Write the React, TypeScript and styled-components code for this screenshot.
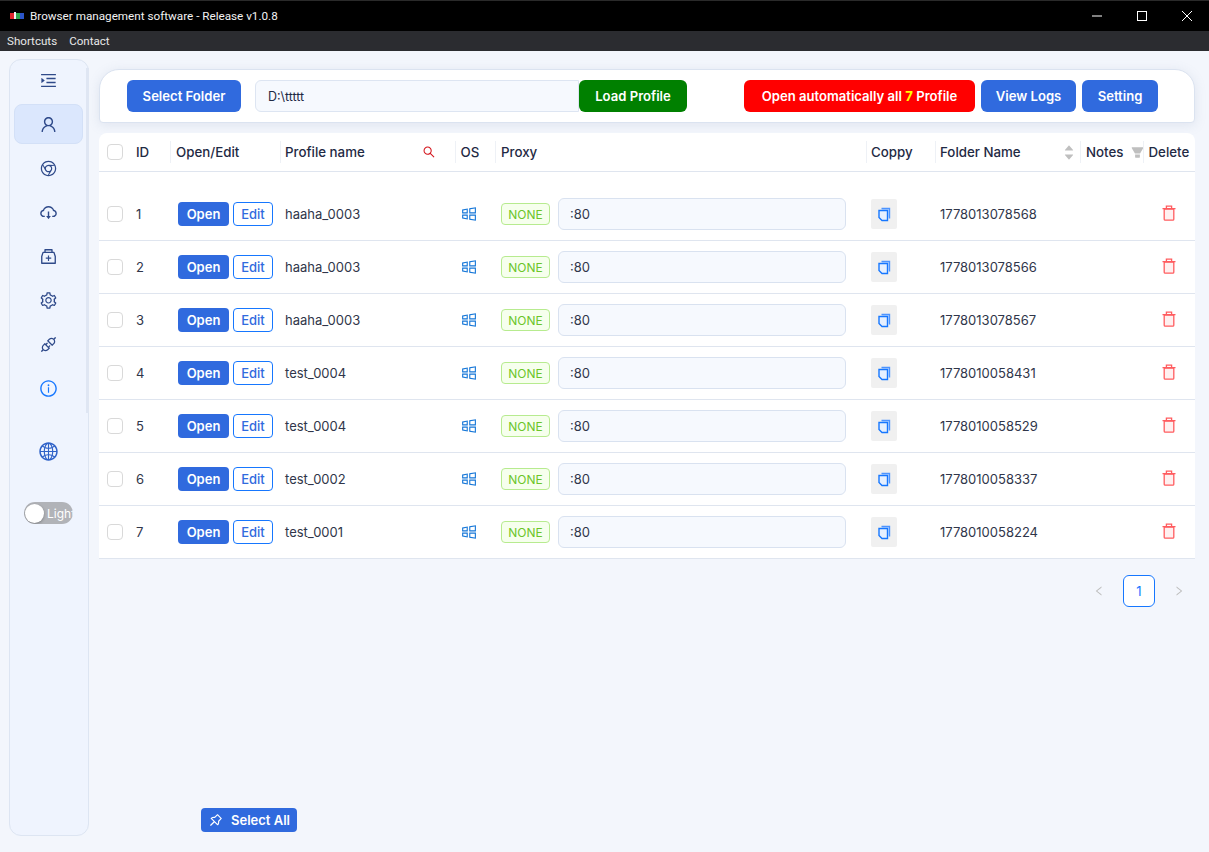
import { FC } from 'react'
import styled, { createGlobalStyle } from 'styled-components'
import {
  AiOutlineApi,
  AiOutlineChrome,
  AiOutlineCloudDownload,
  AiOutlineGlobal,
  AiOutlineInfoCircle,
  AiOutlineMedicineBox,
  AiOutlineMenuUnfold,
  AiOutlinePushpin,
  AiOutlineSearch,
  AiOutlineSetting,
  AiOutlineUser,
  AiOutlineWindows,
  AiFillFilter,
  AiFillCaretUp,
  AiFillCaretDown,
  AiOutlineLeft,
  AiOutlineRight,
} from 'react-icons/ai'

const GlobalStyle = createGlobalStyle`
  html, body {
    margin: 0;
    padding: 0;
    height: 100%;
    background: #f3f6fc;
  }
  * {
    box-sizing: border-box;
  }
  body {
    font-family: Inter, "Liberation Sans", sans-serif;
    font-size: 13px;
    color: #1f2a44;
    overflow: hidden;
  }
`

const Window = styled.div`
  display: flex;
  flex-direction: column;
  width: 1209px;
  height: 852px;
`

const TitleBar = styled.div`
  display: flex;
  align-items: center;
  height: 31px;
  flex: none;
  background: #000;
  border-top: 1px solid #2a2a2a;
  color: #f2f2f2;
  font-family: Roboto, sans-serif;
  font-size: 11.7px;
  padding-left: 10px;
`

const Logo = styled.svg`
  width: 14px;
  height: 8px;
  margin-right: 6px;
`

const TitleText = styled.span`
  flex: 1;
`

const WindowButton = styled.div`
  display: flex;
  align-items: center;
  justify-content: center;
  width: 45px;
  height: 30px;
  svg {
    width: 12px;
    height: 12px;
  }
`

const MenuBar = styled.div`
  display: flex;
  align-items: center;
  gap: 12px;
  height: 20px;
  flex: none;
  background: #2b2c30;
  color: #e8e8e8;
  font-family: Roboto, sans-serif;
  font-size: 11.6px;
  padding-left: 7px;
`

const Body = styled.div`
  display: flex;
  flex: 1;
  min-height: 0;
`

const Sidebar = styled.nav`
  display: flex;
  flex-direction: column;
  align-items: center;
  position: relative;
  width: 80px;
  height: 777px;
  margin: 8px 0 0 9px;
  padding-right: 1px;
  background: #eff4fe;
  border: 1px solid #dde5f2;
  border-radius: 12px;
  flex: none;
  &::after {
    content: '';
    position: absolute;
    right: -1px;
    top: 8px;
    width: 3px;
    height: 345px;
    background: #dfe6f3;
  }
`

const NavItem = styled.div<{ $active?: boolean; $tone?: string }>`
  display: flex;
  align-items: center;
  justify-content: center;
  width: 69px;
  height: 40px;
  margin-bottom: 4px;
  flex: none;
  border-radius: 8px;
  color: ${({ $tone }) => $tone ?? '#2f4a8a'};
  background: ${({ $active }) => ($active ? '#dbe7fd' : 'transparent')};
  border: 1px solid ${({ $active }) => ($active ? '#d3e0f7' : 'transparent')};
  font-size: 19px;
`

const GlobeItem = styled(NavItem)`
  margin-top: 19px;
  font-size: 21px;
`

const Toggle = styled.div`
  display: flex;
  align-items: center;
  width: 49px;
  height: 22px;
  margin-top: 27px;
  border-radius: 11px;
  background: #b1b3b8;
  color: #fff;
  font-size: 12px;
  overflow: hidden;
  flex: none;
`

const ToggleKnob = styled.span`
  width: 19px;
  height: 19px;
  margin: 0 3px 0 1px;
  border-radius: 50%;
  background: #fff;
  box-shadow: 0 1px 3px rgba(0, 0, 0, 0.3);
  flex: none;
`

const Main = styled.main`
  display: flex;
  flex-direction: column;
  flex: 1;
  min-width: 0;
  padding: 18px 14px 20px 10px;
`

const Toolbar = styled.div`
  display: flex;
  align-items: center;
  height: 54px;
  flex: none;
  padding-left: 27px;
  background: #fff;
  border: 1px solid #dbe3f0;
  border-top-left-radius: 20px;
  border-top-right-radius: 20px;
  border-bottom-left-radius: 4px;
  border-bottom-right-radius: 4px;
  box-shadow: 0 2px 12px rgba(120, 135, 170, 0.16);
`

const Button = styled.button<{ $bg?: string; $w: number; $ml?: number }>`
  display: inline-flex;
  align-items: center;
  justify-content: center;
  width: ${({ $w }) => $w}px;
  height: 32px;
  margin-left: ${({ $ml }) => $ml ?? 0}px;
  padding: 0;
  border: none;
  border-radius: 6px;
  background: ${({ $bg }) => $bg ?? '#306ade'};
  color: #fff;
  font-family: inherit;
  font-size: 13.1px;
  font-weight: 600;
  flex: none;
`

const Lucky = styled.b`
  color: #ffff00;
  font-weight: 700;
`

const PathInput = styled.div`
  display: flex;
  align-items: center;
  width: 324px;
  height: 32px;
  margin-left: 14px;
  padding-left: 12px;
  background: #f6f9fe;
  border: 1px solid #dde5f2;
  border-radius: 6px 0 0 6px;
  font-size: 12.5px;
`

const Table = styled.div`
  margin-top: 10px;
  flex: none;
`

const columns = '71px 110px 175px 40px 371px 69px 145px 63px 52px'

const HeaderRow = styled.div`
  display: grid;
  grid-template-columns: ${columns};
  height: 39px;
  background: #fff;
  border-bottom: 1px solid #dfe5ef;
  border-radius: 8px 8px 0 0;
  font-weight: 500;
  font-size: 13.3px;
`

const HeaderCell = styled.div<{ $pl?: number; $pr?: number }>`
  display: flex;
  align-items: center;
  padding-left: ${({ $pl }) => $pl ?? 5}px;
  position: relative;
  justify-content: space-between;
  padding-right: ${({ $pr }) => $pr ?? 8}px;
  &::before {
    content: '';
    position: absolute;
    left: 0;
    top: 8px;
    bottom: 8px;
    width: 1px;
    background: #eef1f6;
  }
`

const IdCell = styled.div`
  display: flex;
  align-items: center;
  gap: 13px;
  padding-left: 8px;
`

const Spacer = styled.div`
  height: 16px;
  background: #fff;
`

const Row = styled.div`
  display: grid;
  grid-template-columns: ${columns};
  align-items: center;
  height: 53px;
  background: #fff;
  border-bottom: 1px solid #dfe5ef;
  font-size: 13px;
  color: #30364a;
`

const Check = styled.span`
  width: 16px;
  height: 16px;
  border: 1px solid #d9d9d9;
  border-radius: 4px;
  background: #fff;
  flex: none;
`

const ActionCell = styled.div`
  display: flex;
  align-items: center;
  gap: 4px;
  padding-left: 8px;
`

const OpenButton = styled.span`
  display: inline-flex;
  align-items: center;
  justify-content: center;
  width: 51px;
  height: 24px;
  background: #306ade;
  color: #fff;
  font-weight: 600;
  border-radius: 4px;
`

const EditButton = styled.span`
  display: inline-flex;
  align-items: center;
  justify-content: center;
  width: 40px;
  height: 24px;
  background: #fff;
  border: 1px solid #1677ff;
  color: #306ade;
  font-weight: 500;
  border-radius: 4px;
`

const NameCell = styled.div`
  padding-left: 5px;
`

const OsCell = styled.div`
  display: flex;
  padding-left: 5px;
  color: #1677d8;
  font-size: 18px;
`

const ProxyCell = styled.div`
  display: flex;
  align-items: center;
  gap: 8px;
  padding-left: 6px;
`

const Tag = styled.span`
  display: inline-flex;
  align-items: center;
  justify-content: center;
  width: 49px;
  height: 22px;
  background: #f6ffed;
  border: 1px solid #b7eb8f;
  border-radius: 4px;
  color: #6cc52a;
  font-size: 12px;
`

const ProxyInput = styled.div`
  display: flex;
  align-items: center;
  width: 288px;
  height: 32px;
  padding-left: 11px;
  background: #f6f9fe;
  border: 1px solid #d9e2f0;
  border-radius: 6px;
`

const CopyCell = styled.div`
  padding-left: 5px;
`

const CopyButton = styled.span`
  display: flex;
  align-items: center;
  justify-content: center;
  width: 26px;
  height: 30px;
  background: #f0f0f0;
  border-radius: 2px;
`

const FolderCell = styled.div`
  padding-left: 5px;
`

const DeleteCell = styled.div`
  display: flex;
  padding-left: 19px;
  margin-top: -2px;
`

const SortIcon = styled.span`
  display: flex;
  flex-direction: column;
  color: #bfbfbf;
  font-size: 12px;
  line-height: 0;
  svg {
    margin: -1.5px 0;
  }
`

const Pagination = styled.div`
  display: flex;
  align-items: center;
  justify-content: flex-end;
  gap: 8px;
  margin-top: 16px;
  color: #bdbdbd;
  font-size: 12px;
`

const PageArrow = styled.span`
  display: flex;
  align-items: center;
  justify-content: center;
  width: 32px;
  height: 32px;
`

const PageNumber = styled.span`
  display: flex;
  align-items: center;
  justify-content: center;
  width: 32px;
  height: 32px;
  background: #fff;
  border: 1px solid #1677ff;
  border-radius: 6px;
  color: #1677ff;
  font-size: 13px;
`

const Footer = styled.div`
  display: flex;
  margin-top: auto;
  padding-left: 102px;
`

const SelectAll = styled.button`
  display: inline-flex;
  align-items: center;
  justify-content: center;
  gap: 7px;
  width: 96px;
  height: 24px;
  padding: 0;
  border: none;
  border-radius: 4px;
  background: #306ade;
  color: #fff;
  font-family: inherit;
  font-size: 13px;
  font-weight: 600;
`

const CopyIcon: FC = () => {
  return <svg width="13" height="15" viewBox="0 0 13 15">
    <path d="M3.5 1.5h8v10" fill="#cfe2ff" stroke="#4d94ff" strokeWidth="1.4" />
    <path d="M1 3.5h8.5v10H4L1 10.5z" fill="#e6f0ff" stroke="#1677ff" strokeWidth="1.4" />
  </svg>
}

const TrashIcon: FC = () => {
  return <svg width="14" height="16" viewBox="0 0 14 16">
    <path d="M2.2 4h9.6v10.2a1 1 0 0 1-1 1H3.2a1 1 0 0 1-1-1z" fill="#fff0f0" stroke="#ff5c5f" strokeWidth="1.3" />
    <path d="M0.5 3.7h13M4.4 3.5V1.1h5.2v2.4" fill="none" stroke="#ff5c5f" strokeWidth="1.3" />
  </svg>
}

const profiles = [
  { id: 1, name: 'haaha_0003', folder: '1778013078568' },
  { id: 2, name: 'haaha_0003', folder: '1778013078566' },
  { id: 3, name: 'haaha_0003', folder: '1778013078567' },
  { id: 4, name: 'test_0004', folder: '1778010058431' },
  { id: 5, name: 'test_0004', folder: '1778010058529' },
  { id: 6, name: 'test_0002', folder: '1778010058337' },
  { id: 7, name: 'test_0001', folder: '1778010058224' },
]

const ProfileRow: FC<{ id: number; name: string; folder: string }> = ({ id, name, folder }) => {
  return <Row>
    <IdCell><Check /><span>{id}</span></IdCell>
    <ActionCell><OpenButton>Open</OpenButton><EditButton>Edit</EditButton></ActionCell>
    <NameCell>{name}</NameCell>
    <OsCell><AiOutlineWindows /></OsCell>
    <ProxyCell><Tag>NONE</Tag><ProxyInput>:80</ProxyInput></ProxyCell>
    <CopyCell><CopyButton><CopyIcon /></CopyButton></CopyCell>
    <FolderCell>{folder}</FolderCell>
    <div />
    <DeleteCell><TrashIcon /></DeleteCell>
  </Row>
}

export default function App() {
  return <Window>
    <GlobalStyle />
    <TitleBar>
      <Logo viewBox="0 0 14 8">
        <rect x="0" y="1" width="4" height="6" fill="#e0262c" />
        <rect x="4" y="0" width="2" height="7" fill="#f2f2f2" />
        <rect x="6" y="1" width="4" height="6" fill="#2fa84f" />
        <rect x="10" y="1" width="4" height="6" fill="#2a54c8" />
      </Logo>
      <TitleText>Browser management software - Release v1.0.8</TitleText>
      <WindowButton>
        <svg viewBox="0 0 12 12"><path d="M1 6h10" stroke="#fff" /></svg>
      </WindowButton>
      <WindowButton>
        <svg viewBox="0 0 12 12"><rect x="1.5" y="1.5" width="9" height="9" fill="none" stroke="#fff" /></svg>
      </WindowButton>
      <WindowButton>
        <svg viewBox="0 0 12 12"><path d="M1 1l10 10M11 1L1 11" stroke="#fff" /></svg>
      </WindowButton>
    </TitleBar>
    <MenuBar><span>Shortcuts</span><span>Contact</span></MenuBar>
    <Body>
      <Sidebar>
        <NavItem><AiOutlineMenuUnfold /></NavItem>
        <NavItem $active><AiOutlineUser /></NavItem>
        <NavItem><AiOutlineChrome /></NavItem>
        <NavItem><AiOutlineCloudDownload /></NavItem>
        <NavItem><AiOutlineMedicineBox /></NavItem>
        <NavItem><AiOutlineSetting /></NavItem>
        <NavItem><AiOutlineApi /></NavItem>
        <NavItem $tone="#1677ff"><AiOutlineInfoCircle /></NavItem>
        <GlobeItem $tone="#2f62c8"><AiOutlineGlobal /></GlobeItem>
        <Toggle><ToggleKnob />Light</Toggle>
      </Sidebar>
      <Main>
        <Toolbar>
          <Button $w={114}>Select Folder</Button>
          <PathInput>D:\ttttt</PathInput>
          <Button $w={108} $bg="#008000">Load Profile</Button>
          <Button $w={231} $ml={57} $bg="#ff0000"><span>Open automatically all <Lucky>7</Lucky> Profile</span></Button>
          <Button $w={95} $ml={6}>View Logs</Button>
          <Button $w={76} $ml={6}>Setting</Button>
        </Toolbar>
        <Table>
          <HeaderRow>
            <IdCell><Check /><span>ID</span></IdCell>
            <HeaderCell $pl={6}>Open/Edit</HeaderCell>
            <HeaderCell>Profile name<AiOutlineSearch color="#d4141c" size={14} style={{ marginRight: 11 }} /></HeaderCell>
            <HeaderCell $pl={5.5}>OS</HeaderCell>
            <HeaderCell $pl={6}>Proxy</HeaderCell>
            <HeaderCell>Coppy</HeaderCell>
            <HeaderCell $pr={5}>Folder Name<SortIcon><AiFillCaretUp /><AiFillCaretDown /></SortIcon></HeaderCell>
            <HeaderCell $pl={6} $pr={0}>Notes<AiFillFilter color="#bfbfbf" size={15} style={{ marginRight: -2 }} /></HeaderCell>
            <HeaderCell $pl={5.5}>Delete</HeaderCell>
          </HeaderRow>
          <Spacer />
          {profiles.map(p => <ProfileRow key={p.id} {...p} />)}
        </Table>
        <Pagination>
          <PageArrow><AiOutlineLeft /></PageArrow>
          <PageNumber>1</PageNumber>
          <PageArrow><AiOutlineRight /></PageArrow>
        </Pagination>
        <Footer>
          <SelectAll><AiOutlinePushpin size={16} />Select All</SelectAll>
        </Footer>
      </Main>
    </Body>
  </Window>
}
